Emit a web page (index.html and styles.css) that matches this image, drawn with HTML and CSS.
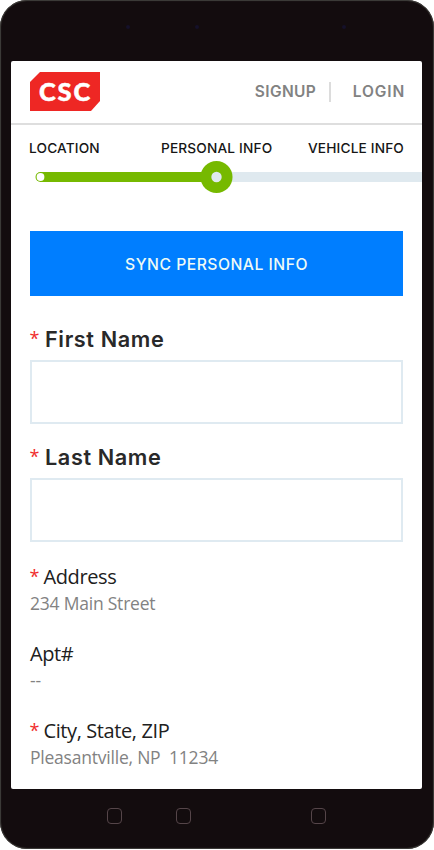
FILE: index.html
```html
<!DOCTYPE html>
<html lang="en">
<head>
<meta charset="utf-8">
<title>Personal Info</title>
<link rel="stylesheet" href="styles.css">
</head>
<body>
<div class="phone">
  <div class="bezel-top"><i class="sensor"></i><i class="sensor"></i><i class="sensor"></i></div>
  <main class="screen">
    <header class="header">
      <div class="logo"><span>CSC</span></div>
      <nav class="nav"><a class="signup">SIGNUP</a><i class="divider"></i><a class="login">LOGIN</a></nav>
    </header>
    <section class="steps">
      <div class="step-labels"><span class="s1">LOCATION</span><span class="s2">PERSONAL INFO</span><span class="s3">VEHICLE INFO</span></div>
      <svg class="track" width="411" height="34" viewBox="0 0 411 34">
        <path d="M205 12H411V22H205z" fill="#dfe9ef"/>
        <path d="M29.500 12H205V22H29.500a5 5 0 0 1 0-10z" fill="#76b900"/>
        <circle cx="29.500" cy="17" r="3.900" fill="#fff"/>
        <circle cx="205.500" cy="17" r="16" fill="#76b900"/>
        <circle cx="205.500" cy="17" r="5.200" fill="#dfe9ef"/>
      </svg>
    </section>
    <form class="form">
      <button class="sync" type="button"><span>SYNC PERSONAL INFO</span></button>
      <label class="field"><span class="label"><b class="req">*</b><span class="first">First Name</span></span><input class="input" type="text"></label>
      <label class="field"><span class="label"><b class="req">*</b><span class="last">Last Name</span></span><input class="input" type="text"></label>
      <dl class="details">
        <div class="row"><dt><b class="req">*</b><span class="address">Address</span></dt><dd class="street">234 Main Street</dd></div>
        <div class="row"><dt><span class="apt">Apt#</span></dt><dd class="none">--</dd></div>
        <div class="row"><dt><b class="req">*</b><span class="city">City, State, ZIP</span></dt><dd class="place">Pleasantville, NP&nbsp; 11234</dd></div>
      </dl>
    </form>
  </main>
  <div class="bezel-bottom"><i class="key"></i><i class="key"></i><i class="key"></i></div>
</div>
</body>
</html>
```
FILE: styles.css
```css
* { box-sizing: border-box; }
body { margin: 0; background: #fff; font-family: Inter, "Liberation Sans", sans-serif; }
.phone { width: 434px; height: 849px; padding: 0 12px 0 11px; background: #130c0e; border-radius: 27px; box-shadow: inset 0 0 1px 1px #41403c; }
.bezel-top { height: 60.500px; display: flex; gap: 65px; padding: 25px 0 0 115px; }
.sensor { width: 4px; height: 4px; border-radius: 50%; background: #151129; }
.sensor:last-child { margin-left: 78px; }
.screen { height: 728.500px; background: #fff; border-radius: 2px; overflow: hidden; }
.header { height: 64px; padding: 0 17px 0 19px; border-bottom: 2px solid #dedede; display: flex; align-items: center; justify-content: space-between; }
.logo { width: 70px; height: 39px; background: #ee2724; clip-path: polygon(10px 0, 100% 0, 100% 29px, 61px 100%, 0 100%, 0 10px); color: #fff; font: 900 25.500px/39px Lato, sans-serif; letter-spacing: 1.800px; padding-left: 9px; -webkit-text-stroke: .5px #fff; }
.nav { display: flex; align-items: center; font-weight: 600; font-size: 15.500px; color: #828282; white-space: nowrap; }
.signup { letter-spacing: .400px; }
.login { letter-spacing: .900px; margin-right: -.2px; }
.divider { width: 2px; height: 20px; background: #dcdcdc; margin: 0 22px 0 12.500px; }
.steps { height: 106.500px; }
.step-labels { height: 35px; padding: 14px 0 0 18px; display: flex; font-size: 13.700px; line-height: 18px; font-weight: 500; color: #161616; white-space: nowrap; letter-spacing: .150px; }
.s1 { width: 132px; }
.s2 { width: 147px; }
.track { display: block; }
.form { padding: 0 19px; }
.sync { display: block; width: 373px; height: 64.500px; border: 0; padding: 3px 0 0; background: #007eff; color: #eefaf5; font: 500 15.700px/61px Inter, sans-serif; letter-spacing: .500px; }
.field { display: block; height: 118px; padding-top: 28px; }
.label { display: flex; height: 36px; line-height: 31px; font-size: 21.700px; font-weight: 600; letter-spacing: .600px; color: #292929; }
.req { width: 15px; font: 400 18px/28px "Open Sans", sans-serif; letter-spacing: 0; color: #f02b2b; margin-left: -.5px; margin-right: .5px; }
.input { display: block; width: 373px; height: 64px; border: 2px solid #dfeaf1; background: #fff; outline: 0; padding: 0 12px; }
.details { margin: 0; padding-top: 31px; font-family: "Open Sans", sans-serif; }
.row { height: 77px; }
dt { display: flex; height: 28px; font-size: 20px; line-height: 28px; letter-spacing: -.400px; color: #202020; }
dt .req { width: 13.500px; line-height: 26px; }
dd { margin: 0; font-size: 17.500px; line-height: 25px; letter-spacing: -.220px; color: #828282; }
.bezel-bottom { height: 60px; display: flex; padding: 19px 0 0 96px; }
.key { width: 15px; height: 16px; border: 1.500px solid #554549; border-radius: 4px; margin-right: 54px; }
.key:nth-child(2) { margin-right: 120px; }
```
